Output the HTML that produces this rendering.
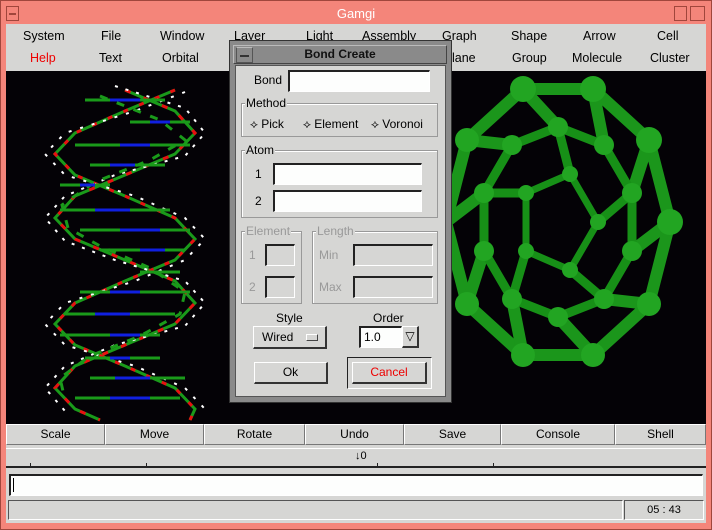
<!DOCTYPE html>
<html><head><style>
*{margin:0;padding:0;box-sizing:border-box}
body{width:712px;height:530px;background:#f4857a;font-family:"Liberation Sans",sans-serif;font-size:12px;color:#000;position:relative;overflow:hidden}
.a{position:absolute}
.t{position:absolute;white-space:nowrap}
.in{position:absolute;background:#fdfefd;border-top:2px solid #222;border-left:2px solid #222;border-bottom:1px solid #fff;border-right:1px solid #fff}
.dis{position:absolute;background:#d6d6d4;border-top:2px solid #222;border-left:2px solid #222;border-bottom:1px solid #fff;border-right:1px solid #fff}
.btn{position:absolute;background:#d6d6d4;border-top:1px solid #fff;border-left:1px solid #fff;border-bottom:2px solid #333;border-right:2px solid #333;text-align:center}
.grp{position:absolute;border:1px solid #999;box-shadow:1px 1px 0 #fff inset}
.lg{position:absolute;background:#d6d6d4;padding:0 1px;top:-8px;left:3px}
.tb{position:absolute;top:424px;height:21px;background:#d6d6d4;border-top:1px solid #fff;border-left:1px solid #fff;border-right:1px solid #777;border-bottom:1px solid #777;text-align:center;line-height:19px}
</style></head><body>
<div class="a" style="left:0;top:0;width:712px;height:530px;border:1px solid #a0463c"></div>
<div class="a" style="left:6px;top:6px;width:13px;height:15px;border:1px solid #a0463c"></div>
<div class="a" style="left:9px;top:13px;width:7px;height:2px;background:#a0463c"></div>
<div class="a" style="left:674px;top:6px;width:13px;height:15px;border:1px solid #a0463c"></div>
<div class="a" style="left:690px;top:6px;width:15px;height:15px;border:1px solid #a0463c"></div>
<div class="t" style="left:0;width:712px;text-align:center;top:6px;color:#fff;font-size:13px">Gamgi</div>
<div class="a" style="left:6px;top:24px;width:700px;height:47px;background:#d6d6d4"></div>
<div class="t" style="left:23px;top:29px;font-size:12.5px">System</div>
<div class="t" style="left:101px;top:29px;font-size:12.5px">File</div>
<div class="t" style="left:160px;top:29px;font-size:12.5px">Window</div>
<div class="t" style="left:234px;top:29px;font-size:12.5px">Layer</div>
<div class="t" style="left:306px;top:29px;font-size:12.5px">Light</div>
<div class="t" style="left:362px;top:29px;font-size:12.5px">Assembly</div>
<div class="t" style="left:442px;top:29px;font-size:12.5px">Graph</div>
<div class="t" style="left:511px;top:29px;font-size:12.5px">Shape</div>
<div class="t" style="left:583px;top:29px;font-size:12.5px">Arrow</div>
<div class="t" style="left:657px;top:29px;font-size:12.5px">Cell</div>
<div class="t" style="left:30px;top:51px;font-size:12.5px;color:#e00">Help</div>
<div class="t" style="left:99px;top:51px;font-size:12.5px">Text</div>
<div class="t" style="left:162px;top:51px;font-size:12.5px">Orbital</div>
<div class="t" style="left:452px;top:51px;font-size:12.5px">lane</div>
<div class="t" style="left:512px;top:51px;font-size:12.5px">Group</div>
<div class="t" style="left:572px;top:51px;font-size:12.5px">Molecule</div>
<div class="t" style="left:650px;top:51px;font-size:12.5px">Cluster</div>
<div class="a" style="left:6px;top:71px;width:700px;height:353px;background:#040206"></div>
<svg class="a" style="left:0;top:0" width="712" height="530">
<g fill="none" stroke-width="3">
<polyline stroke="#1a9a1a" points="125,90 175,111 195,133 175,154 125,175 75,196 55,218 75,239 125,260 175,281 195,303 175,324 125,345 75,366 55,388 75,409 100,420"/>
<polyline stroke="#e81010" stroke-dasharray="6 14" points="125,90 175,111 195,133 175,154 125,175 75,196 55,218 75,239 125,260 175,281 195,303 175,324 125,345 75,366 55,388 75,409 100,420"/>
<polyline stroke="#1a9a1a" points="175,90 125,111 75,133 55,154 75,175 125,196 175,218 195,239 175,260 125,281 75,303 55,324 75,345 125,366 175,388 195,409 190,420"/>
<polyline stroke="#e81010" stroke-dasharray="5 12" points="175,90 125,111 75,133 55,154 75,175 125,196 175,218 195,239 175,260 125,281 75,303 55,324 75,345 125,366 175,388 195,409 190,420"/>
<polyline stroke="#fff" stroke-width="2" stroke-dasharray="3 8" points="115,86 185,108 205,133 185,156 115,175 65,196 45,218 65,241 115,260 185,281 205,303 185,326 115,345 65,366 45,388 65,411"/>
<polyline stroke="#fff" stroke-width="2" stroke-dasharray="3 9" points="185,92 135,111 65,133 45,154 65,175 135,196 185,218 205,239 185,260 135,281 65,303 45,324 65,345 135,366 185,388 205,409"/>
<polyline stroke="#1a9a1a" stroke-width="3" stroke-dasharray="8 10" points="100,96 160,120 185,140 150,160 95,182 62,205 68,228 100,246 150,268 185,292 180,314 140,336 90,356 60,378 65,400"/>
</g>
<g stroke-width="3">
<line x1="85" y1="100" x2="165" y2="100" stroke="#1a9a1a"/><line x1="110" y1="100" x2="140" y2="100" stroke="#1020e0"/>
<line x1="130" y1="122" x2="190" y2="122" stroke="#1a9a1a"/><line x1="150" y1="122" x2="170" y2="122" stroke="#1020e0"/>
<line x1="75" y1="145" x2="190" y2="145" stroke="#1a9a1a"/><line x1="120" y1="145" x2="150" y2="145" stroke="#1020e0"/>
<line x1="90" y1="165" x2="165" y2="165" stroke="#1a9a1a"/><line x1="110" y1="165" x2="135" y2="165" stroke="#1020e0"/>
<line x1="60" y1="185" x2="110" y2="185" stroke="#1a9a1a"/><line x1="80" y1="185" x2="95" y2="185" stroke="#1020e0"/>
<line x1="60" y1="210" x2="170" y2="210" stroke="#1a9a1a"/><line x1="95" y1="210" x2="130" y2="210" stroke="#1020e0"/>
<line x1="80" y1="230" x2="190" y2="230" stroke="#1a9a1a"/><line x1="120" y1="230" x2="160" y2="230" stroke="#1020e0"/>
<line x1="100" y1="250" x2="185" y2="250" stroke="#1a9a1a"/><line x1="140" y1="250" x2="165" y2="250" stroke="#1020e0"/>
<line x1="140" y1="272" x2="180" y2="272" stroke="#1a9a1a"/>
<line x1="80" y1="292" x2="190" y2="292" stroke="#1a9a1a"/><line x1="110" y1="292" x2="140" y2="292" stroke="#1020e0"/>
<line x1="65" y1="314" x2="175" y2="314" stroke="#1a9a1a"/><line x1="95" y1="314" x2="130" y2="314" stroke="#1020e0"/>
<line x1="60" y1="335" x2="160" y2="335" stroke="#1a9a1a"/><line x1="110" y1="335" x2="140" y2="335" stroke="#1020e0"/>
<line x1="85" y1="358" x2="160" y2="358" stroke="#1a9a1a"/><line x1="110" y1="358" x2="130" y2="358" stroke="#1020e0"/>
<line x1="90" y1="378" x2="185" y2="378" stroke="#1a9a1a"/><line x1="115" y1="378" x2="150" y2="378" stroke="#1020e0"/>
<line x1="75" y1="398" x2="180" y2="398" stroke="#1a9a1a"/><line x1="110" y1="398" x2="150" y2="398" stroke="#1020e0"/>
</g>
<g stroke="#1b961b" stroke-width="12" stroke-linecap="round">
<polygon fill="none" points="670,222 649,304 593,355 523,355 467,304 446,222 467,140 523,89 593,89 649,140"/>
<line x1="670" y1="222" x2="632" y2="251"/><line x1="649" y1="304" x2="604" y2="299"/><line x1="593" y1="355" x2="558" y2="317"/><line x1="523" y1="355" x2="512" y2="299"/><line x1="467" y1="304" x2="484" y2="251"/><line x1="446" y1="222" x2="484" y2="193"/><line x1="467" y1="140" x2="512" y2="145"/><line x1="523" y1="89" x2="558" y2="127"/><line x1="593" y1="89" x2="604" y2="145"/><line x1="649" y1="140" x2="632" y2="193"/>
</g>
<g stroke="#179017" stroke-width="9">
<polygon fill="none" points="632,251 604,299 558,317 512,299 484,251 484,193 512,145 558,127 604,145 632,193"/>
<polygon fill="none" stroke-width="7" points="598,222 570,270 526,251 526,193 570,174"/>
<line x1="632" y1="193" x2="598" y2="222"/><line x1="604" y1="299" x2="570" y2="270"/><line x1="512" y1="299" x2="526" y2="251"/><line x1="484" y1="193" x2="526" y2="193"/><line x1="558" y1="127" x2="570" y2="174"/>
</g>
<g fill="#22a522">
<circle cx="670" cy="222" r="13"/><circle cx="649" cy="304" r="12"/><circle cx="593" cy="355" r="12"/><circle cx="523" cy="355" r="12"/><circle cx="467" cy="304" r="12"/><circle cx="467" cy="140" r="12"/><circle cx="523" cy="89" r="13"/><circle cx="593" cy="89" r="13"/><circle cx="649" cy="140" r="13"/>
<circle cx="632" cy="251" r="10"/><circle cx="604" cy="299" r="10"/><circle cx="558" cy="317" r="10"/><circle cx="512" cy="299" r="10"/><circle cx="484" cy="251" r="10"/><circle cx="484" cy="193" r="10"/><circle cx="512" cy="145" r="10"/><circle cx="558" cy="127" r="10"/><circle cx="604" cy="145" r="10"/><circle cx="632" cy="193" r="10"/>
<circle cx="598" cy="222" r="8"/><circle cx="570" cy="270" r="8"/><circle cx="526" cy="251" r="8"/><circle cx="526" cy="193" r="8"/><circle cx="570" cy="174" r="8"/>
</g>
</svg>
<div class="tb" style="left:6px;width:99px">Scale</div>
<div class="tb" style="left:105px;width:99px">Move</div>
<div class="tb" style="left:204px;width:101px">Rotate</div>
<div class="tb" style="left:305px;width:99px">Undo</div>
<div class="tb" style="left:404px;width:97px">Save</div>
<div class="tb" style="left:501px;width:114px">Console</div>
<div class="tb" style="left:615px;width:91px">Shell</div>
<div class="a" style="left:6px;top:445px;width:700px;height:78px;background:#d6d6d4"></div>
<div class="a" style="left:6px;top:448px;width:700px;height:20px;background:#d6d6d4;border-top:1px solid #fff;border-bottom:2px solid #222"></div>
<div class="a" style="left:30px;top:463px;width:1px;height:3px;background:#222"></div>
<div class="a" style="left:146px;top:463px;width:1px;height:3px;background:#222"></div>
<div class="a" style="left:377px;top:463px;width:1px;height:3px;background:#222"></div>
<div class="a" style="left:493px;top:463px;width:1px;height:3px;background:#222"></div>
<div class="t" style="left:355px;top:450px;font-size:11px">↓0</div>
<div class="in" style="left:9px;top:474px;width:694px;height:22px"></div>
<div class="a" style="left:13px;top:478px;width:1px;height:14px;background:#000"></div>
<div class="a" style="left:8px;top:500px;height:20px;border-top:1px solid #555;border-left:1px solid #555;border-bottom:1px solid #fff;border-right:1px solid #fff;width:615px"></div>
<div class="a" style="left:624px;top:500px;width:80px;height:20px;border-top:1px solid #555;border-left:1px solid #555;border-bottom:1px solid #fff;border-right:1px solid #fff;text-align:center;line-height:18px;font-size:11px">05 : 43</div>
<div class="a" style="left:229px;top:40px;width:223px;height:363px;background:#8a8a8a;border:1px solid #333"></div>
<div class="a" style="left:233px;top:45px;width:214px;height:19px;background:#8a8a8a;border:1px solid #444;border-top-color:#bbb;border-left-color:#bbb"></div>
<div class="a" style="left:236px;top:47px;width:17px;height:16px;border:1px solid #555;border-top-color:#bbb"></div>
<div class="a" style="left:240px;top:55px;width:9px;height:2px;background:#333"></div>
<div class="t" style="left:233px;width:214px;text-align:center;top:47px;font-weight:bold;font-size:12px;color:#111">Bond Create</div>
<div class="a" style="left:235px;top:65px;width:211px;height:332px;background:#d6d6d4;border:1px solid #555"></div>
<div class="t" style="left:254px;top:73px">Bond</div>
<div class="in" style="left:288px;top:70px;width:142px;height:22px"></div>
<div class="grp" style="left:241px;top:103px;width:197px;height:34px"><span class="lg">Method</span></div>
<div class="t" style="left:250px;top:117px">⟡ Pick</div>
<div class="t" style="left:303px;top:117px">⟡ Element</div>
<div class="t" style="left:371px;top:117px">⟡ Voronoi</div>
<div class="grp" style="left:241px;top:150px;width:197px;height:68px"><span class="lg">Atom</span></div>
<div class="t" style="left:255px;top:167px">1</div>
<div class="in" style="left:273px;top:163px;width:149px;height:22px"></div>
<div class="t" style="left:255px;top:194px">2</div>
<div class="in" style="left:273px;top:190px;width:149px;height:22px"></div>
<div class="grp" style="left:241px;top:231px;width:61px;height:73px"><span class="lg" style="color:#999">Element</span></div>
<div class="t" style="left:249px;top:248px;color:#999">1</div>
<div class="dis" style="left:265px;top:244px;width:30px;height:22px"></div>
<div class="t" style="left:249px;top:280px;color:#999">2</div>
<div class="dis" style="left:265px;top:276px;width:30px;height:22px"></div>
<div class="grp" style="left:312px;top:231px;width:126px;height:73px"><span class="lg" style="color:#999">Length</span></div>
<div class="t" style="left:319px;top:248px;color:#999">Min</div>
<div class="dis" style="left:353px;top:244px;width:80px;height:22px"></div>
<div class="t" style="left:319px;top:280px;color:#999">Max</div>
<div class="dis" style="left:353px;top:276px;width:80px;height:22px"></div>
<div class="t" style="left:276px;top:311px">Style</div>
<div class="btn" style="left:253px;top:326px;width:74px;height:23px;text-align:left;padding-left:8px;line-height:20px">Wired</div>
<div class="a" style="left:306px;top:334px;width:12px;height:7px;border:1px solid #444;border-top-color:#fff;border-left-color:#fff"></div>
<div class="t" style="left:373px;top:311px">Order</div>
<div class="in" style="left:359px;top:326px;width:43px;height:22px;padding-left:3px;line-height:18px">1.0</div>
<div class="btn" style="left:402px;top:326px;width:17px;height:22px;line-height:18px">▽</div>
<div class="btn" style="left:254px;top:362px;width:74px;height:22px;line-height:19px">Ok</div>
<div class="a" style="left:347px;top:357px;width:85px;height:32px;border:1px solid #222;border-right-color:#fff;border-bottom-color:#fff"></div>
<div class="btn" style="left:352px;top:362px;width:75px;height:22px;line-height:19px;color:#e00">Cancel</div>
</body></html>
